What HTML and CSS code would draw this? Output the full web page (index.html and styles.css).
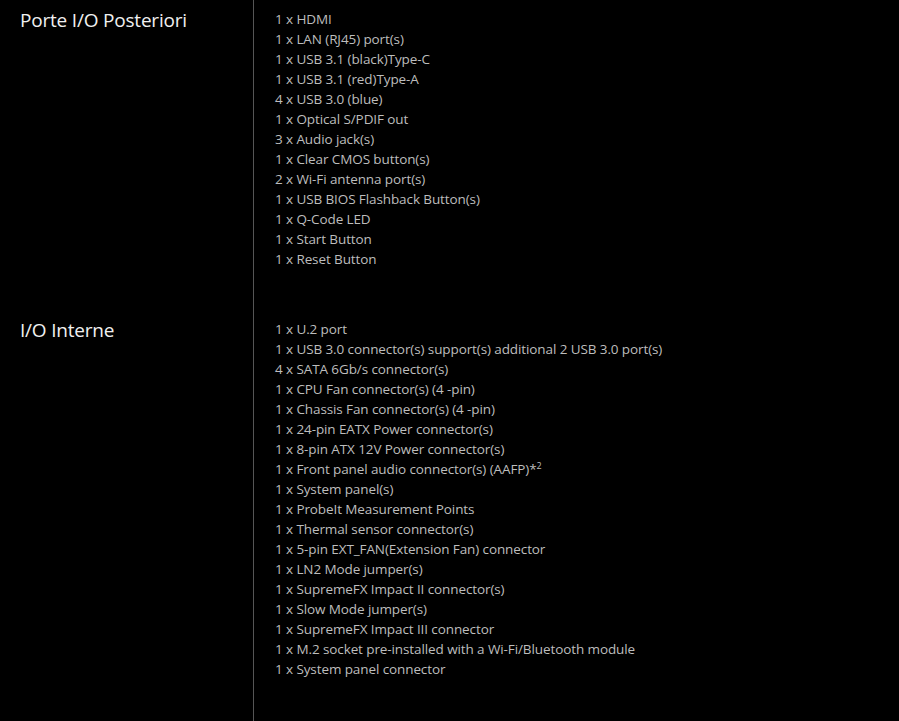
FILE: index.html
```html
<!DOCTYPE html>
<html>
<head>
<meta charset="utf-8">
<link rel="stylesheet" href="styles.css">
</head>
<body>
<div class="specs">
  <div class="row">
    <div class="label">Porte I/O Posteriori</div>
    <ul class="values">
      <li>1 x HDMI</li>
      <li>1 x LAN (RJ45) port(s)</li>
      <li>1 x USB 3.1 (black)Type-C</li>
      <li>1 x USB 3.1 (red)Type-A</li>
      <li>4 x USB 3.0 (blue)</li>
      <li>1 x Optical S/PDIF out</li>
      <li>3 x Audio jack(s)</li>
      <li>1 x Clear CMOS button(s)</li>
      <li>2 x Wi-Fi antenna port(s)</li>
      <li>1 x USB BIOS Flashback Button(s)</li>
      <li>1 x Q-Code LED</li>
      <li>1 x Start Button</li>
      <li>1 x Reset Button</li>
    </ul>
  </div>
  <div class="row">
    <div class="label">I/O Interne</div>
    <ul class="values">
      <li>1 x U.2 port</li>
      <li>1 x USB 3.0 connector(s) support(s) additional 2 USB 3.0 port(s)</li>
      <li>4 x SATA 6Gb/s connector(s)</li>
      <li>1 x CPU Fan connector(s) (4 -pin)</li>
      <li>1 x Chassis Fan connector(s) (4 -pin)</li>
      <li>1 x 24-pin EATX Power connector(s)</li>
      <li>1 x 8-pin ATX 12V Power connector(s)</li>
      <li>1 x Front panel audio connector(s) (AAFP)*<sup>2</sup></li>
      <li>1 x System panel(s)</li>
      <li>1 x ProbeIt Measurement Points</li>
      <li>1 x Thermal sensor connector(s)</li>
      <li>1 x 5-pin EXT_FAN(Extension Fan) connector</li>
      <li>1 x LN2 Mode jumper(s)</li>
      <li>1 x SupremeFX Impact II connector(s)</li>
      <li>1 x Slow Mode jumper(s)</li>
      <li>1 x SupremeFX Impact III connector</li>
      <li>1 x M.2 socket pre-installed with a Wi-Fi/Bluetooth module</li>
      <li>1 x System panel connector</li>
    </ul>
  </div>
</div>
</body>
</html>
```
FILE: styles.css
```css
html, body {
  margin: 0;
  padding: 0;
  background: #000;
  height: 100%;
  overflow: hidden;
}
body {
  font-family: "Open Sans", "Noto Sans", sans-serif;
}
.specs {
  display: flex;
  flex-direction: column;
  min-height: 100%;
}
.row {
  display: flex;
}
.row:last-child {
  flex: 1;
}
.label {
  width: 253px;
  flex: none;
  box-sizing: border-box;
  padding: 8px 0 0 20px;
  color: #f0f0f0;
  font-size: 19px;
  line-height: 24px;
  letter-spacing: -0.2px;
}
.values {
  list-style: none;
  margin: 0;
  padding: 9px 0 41px 21px;
  border-left: 1px solid #555;
  flex: 1;
  color: #bdbdbd;
  font-size: 13.5px;
  line-height: 20px;
  letter-spacing: -0.1px;
}
.row:last-child .values {
  padding-bottom: 0;
}
.values li {
  height: 20px;
  white-space: nowrap;
}
.values sup {
  font-size: 9px;
  line-height: 0;
  vertical-align: 5px;
}
```
